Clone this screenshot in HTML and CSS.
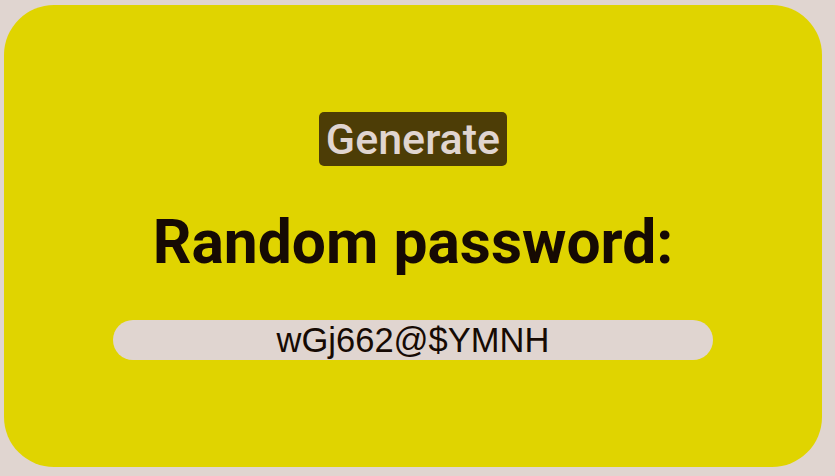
FILE: index.html
```html
<!DOCTYPE html>
<html>
<head>
<meta charset="utf-8">
<link rel="stylesheet" href="styles.css">
</head>
<body>
<div class="card">
  <button class="gen">Generate</button>
  <h1 class="title">Random password:</h1>
  <div class="field">wGj662@$YMNH</div>
</div>
</body>
</html>
```
FILE: styles.css
```css
html, body {
  margin: 0;
  padding: 0;
  background: #e0d5d0;
  width: 835px;
  height: 476px;
  overflow: hidden;
}
body {
  padding: 5px 13px 9px 4px;
  box-sizing: border-box;
}
.card {
  height: 462px;
  background: #e0d400;
  border-radius: 50px;
  display: flex;
  flex-direction: column;
  align-items: center;
  padding-top: 107px;
  box-sizing: border-box;
  font-family: Roboto, sans-serif;
}
.gen {
  font-family: Roboto, sans-serif;
  font-size: 43px;
  font-weight: 500;
  line-height: 54px;
  height: 54px;
  padding: 0 7px;
  border: none;
  border-radius: 5px;
  background: #4d3d06;
  color: #e0d5d0;
}
.title {
  margin: 42px 0 0;
  font-size: 60.5px;
  font-weight: 700;
  line-height: 70px;
  color: #160a03;
}
.field {
  margin-top: 42px;
  width: 600px;
  height: 40px;
  border-radius: 20px;
  background: #e0d5d0;
  color: #160a03;
  font-family: "Liberation Sans", Arial, sans-serif;
  font-size: 34.5px;
  line-height: 40px;
  text-align: center;
}
```
